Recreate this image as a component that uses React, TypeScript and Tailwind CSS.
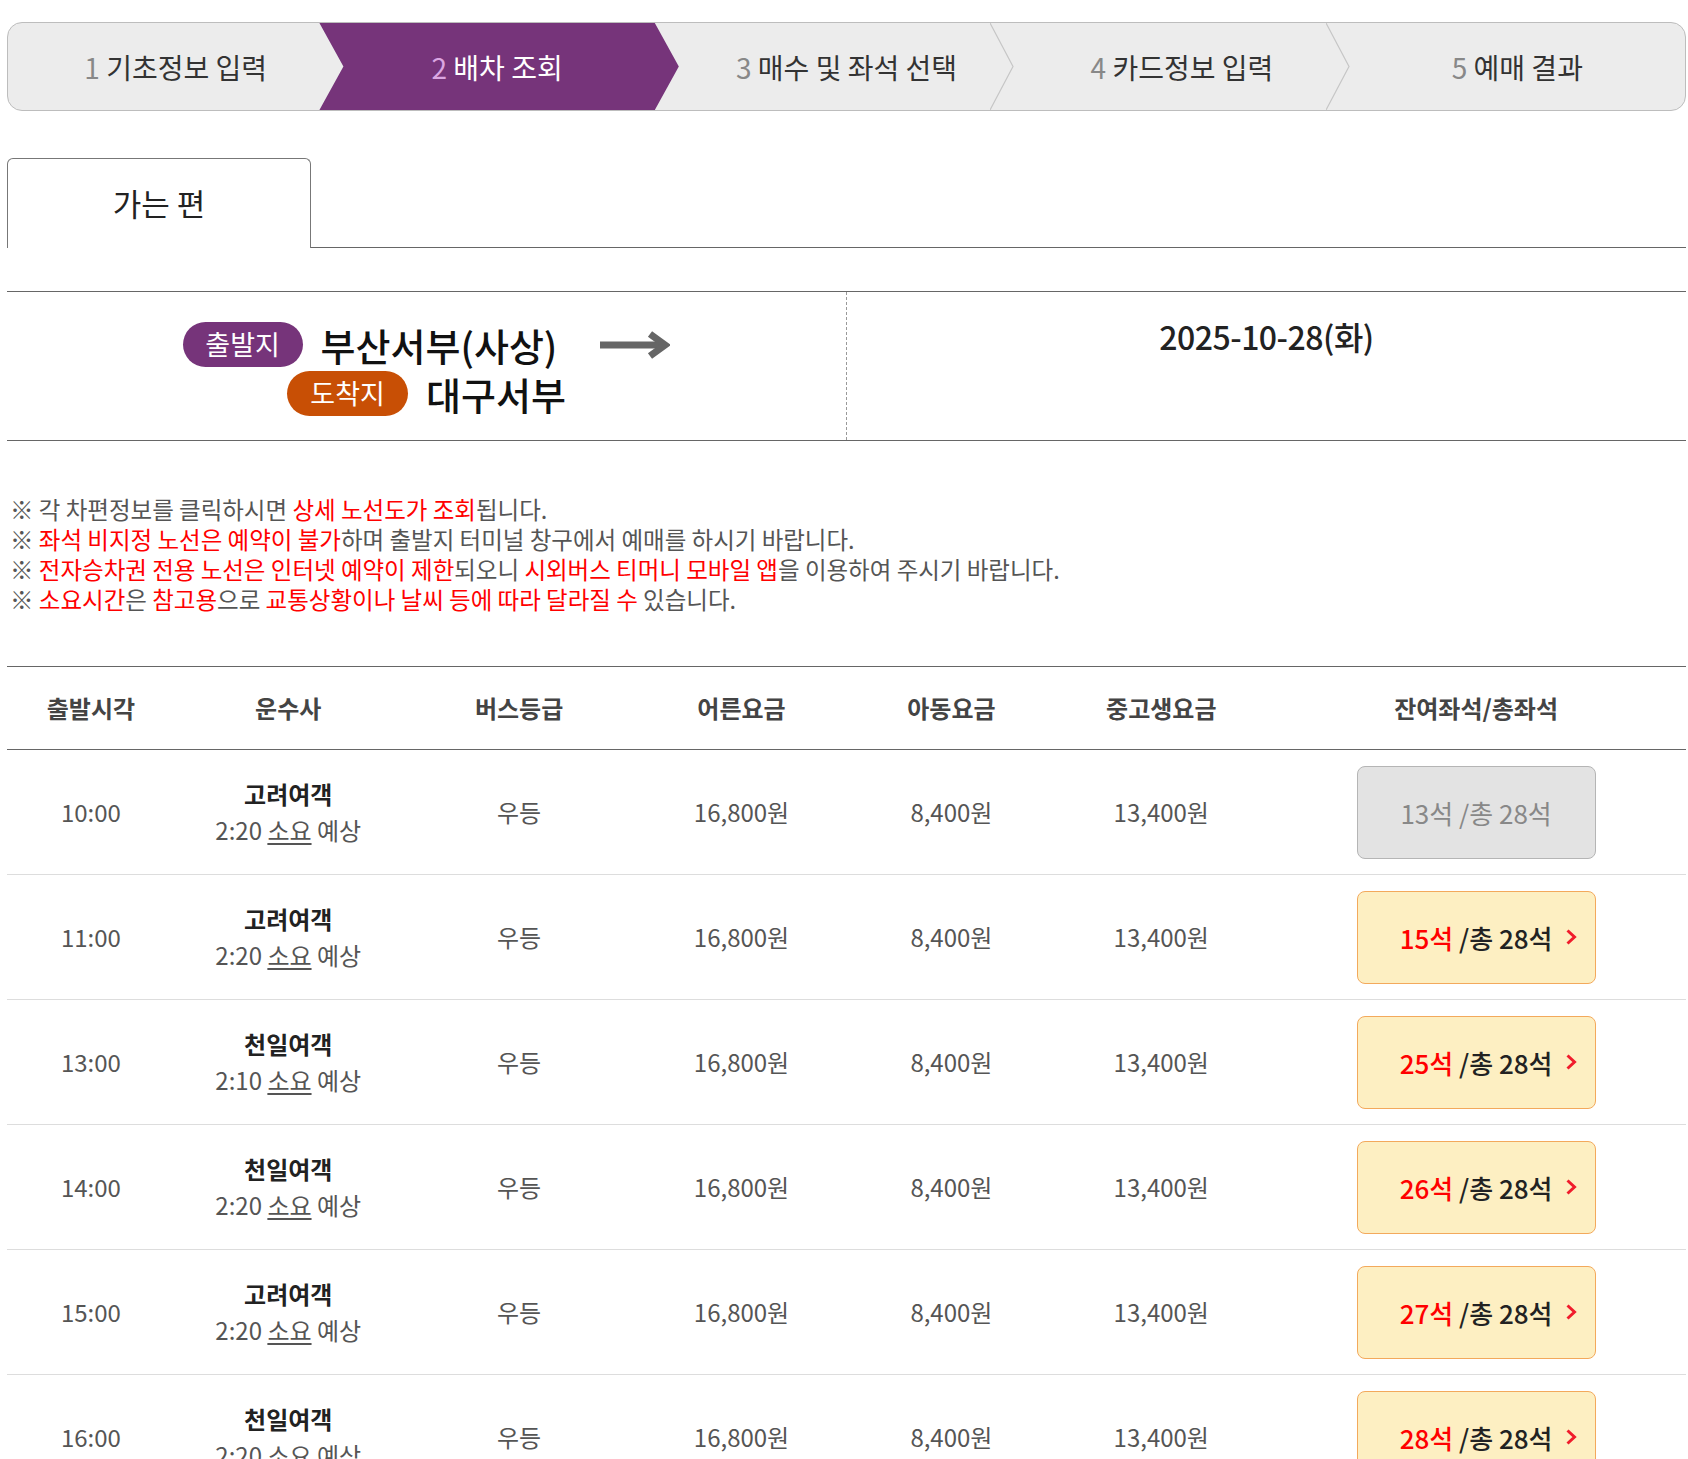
import React from "react";

const steps = ["기초정보 입력", "배차 조회", "매수 및 좌석 선택", "카드정보 입력", "예매 결과"];

type Row = { time: string; company: string; dur: string; seats: number; active: boolean };
const rows: Row[] = [
  { time: "10:00", company: "고려여객", dur: "2:20", seats: 13, active: false },
  { time: "11:00", company: "고려여객", dur: "2:20", seats: 15, active: true },
  { time: "13:00", company: "천일여객", dur: "2:10", seats: 25, active: true },
  { time: "14:00", company: "천일여객", dur: "2:20", seats: 26, active: true },
  { time: "15:00", company: "고려여객", dur: "2:20", seats: 27, active: true },
  { time: "16:00", company: "천일여객", dur: "2:20", seats: 28, active: true },
];

const gridCols = "grid grid-cols-[10%_13.5%_14%_12.5%_12.5%_12.5%_25%]";

function Red({ children }: { children: React.ReactNode }) {
  return <span className="text-[#ff0000]">{children}</span>;
}

export default function App() {
  return (
    <div className="min-h-screen bg-white pl-[7px] pr-[2px] pt-[22px] font-['Noto_Sans_CJK_KR','Noto_Sans',sans-serif] text-[#555]">
      {/* Step bar */}
      <div className="flex h-[89px] overflow-hidden rounded-[15px] border border-[#bdbdbd] bg-[#ececec]">
        {steps.map((s, i) => (
          <div key={i} className="relative flex flex-1 items-center justify-center">
            {i === 1 && (
              <div className="absolute inset-y-0 left-[-24px] right-0 bg-[#76347a] [clip-path:polygon(0_0,calc(100%_-_24px)_0,100%_50%,calc(100%_-_24px)_100%,0_100%,24px_50%)]" />
            )}
            {(i === 2 || i === 3) && (
              <svg className="absolute right-0 top-0 h-full w-[24px]" viewBox="0 0 24 88" preserveAspectRatio="none">
                <polyline points="0,0 23,44 0,88" fill="none" stroke="#c6c6c6" strokeWidth="1.2" />
              </svg>
            )}
            <span
              className={
                "relative text-[28px] " +
                (i === 1 ? "pr-[28px] text-white" : "text-[#333]")
              }
            >
              <span className={i === 1 ? "text-[#dba6e2]" : "text-[#888]"}>{i + 1}</span> {s}
            </span>
          </div>
        ))}
      </div>

      {/* Tab */}
      <div className="mt-[47px] flex h-[90px]">
        <div className="flex w-[304px] items-center justify-center rounded-t-[6px] border-x border-t border-[#777] text-[31px] text-[#222]">
          가는 편
        </div>
        <div className="flex-1 border-b border-[#666]" />
      </div>

      {/* Route */}
      <div className="mt-[43px] flex h-[150px] border-y border-[#666]">
        <div className="flex w-[840px] flex-col items-center gap-[4px] border-r border-dashed border-[#999] pt-[30px]">
          <div className="flex h-[45px] items-center">
            <span className="flex h-[45px] w-[120px] items-center justify-center rounded-full bg-[#76347a] text-[27px] text-white">
              출발지
            </span>
            <span className="ml-[18px] text-[38px] font-medium leading-none text-[#111]">부산서부(사상)</span>
            <svg className="ml-[43px]" width="70" height="28" viewBox="0 0 70 28">
              <line x1="0" y1="14" x2="62" y2="14" stroke="#666" strokeWidth="7" />
              <polyline points="50,3 65,14 50,25" fill="none" stroke="#666" strokeWidth="7" />
            </svg>
          </div>
          <div className="flex h-[45px] items-center">
            <span className="flex h-[45px] w-[121px] items-center justify-center rounded-full bg-[#c84f05] text-[27px] text-white">
              도착지
            </span>
            <span className="ml-[18px] text-[38px] font-medium leading-none text-[#111]">대구서부</span>
          </div>
        </div>
        <div className="flex flex-1 justify-center pt-[20px]">
          <span className="text-[32px] font-medium tracking-[-0.5px] text-[#222]">2025-10-28(화)</span>
        </div>
      </div>

      {/* Notices */}
      <div className="mt-[53px] pl-[3px] text-[23.5px] leading-[30px] text-[#555]">
        <p>
          ※ 각 차편정보를 클릭하시면 <Red>상세 노선도가 조회</Red>됩니다.
        </p>
        <p>
          ※ <Red>좌석 비지정 노선은 예약이 불가</Red>하며 출발지 터미널 창구에서 예매를 하시기 바랍니다.
        </p>
        <p>
          ※ <Red>전자승차권 전용 노선은 인터넷 예약이 제한</Red>되오니 <Red>시외버스 티머니 모바일 앱</Red>을 이용하여 주시기 바랍니다.
        </p>
        <p>
          ※ <Red>소요시간</Red>은 <Red>참고용</Red>으로 <Red>교통상황이나 날씨 등에 따라 달라질 수</Red> 있습니다.
        </p>
      </div>

      {/* Table */}
      <div className="mt-[52px]">
        <div className={gridCols + " h-[84px] items-center border-y border-[#666] text-center text-[24px] font-bold text-[#444]"}>
          <div>출발시각</div>
          <div>운수사</div>
          <div>버스등급</div>
          <div>어른요금</div>
          <div>아동요금</div>
          <div>중고생요금</div>
          <div>잔여좌석/총좌석</div>
        </div>
        {rows.map((r, i) => (
          <div key={i} className={gridCols + " h-[125px] items-center border-b border-[#ddd] text-center text-[24px] text-[#555]"}>
            <div>{r.time}</div>
            <div className="flex flex-col items-center leading-[36px]">
              <span className="font-bold text-[#222]">{r.company}</span>
              <span>
                {r.dur} <span className="underline underline-offset-[3px]">소요</span> 예상
              </span>
            </div>
            <div>우등</div>
            <div>16,800원</div>
            <div>8,400원</div>
            <div>13,400원</div>
            <div className="flex justify-center">
              {r.active ? (
                <div className="relative flex h-[93px] w-[239px] items-center justify-center rounded-[8px] border border-[#f3a95c] bg-[#fdefc2] text-[26px] font-medium text-[#222]">
                  <span>
                    <span className="text-[#ff0000]">{r.seats}석</span> /총 28석
                  </span>
                  <svg className="absolute right-[18px] top-1/2 -translate-y-1/2" width="12" height="18" viewBox="0 0 12 18">
                    <polyline points="2.5,2.5 9.5,9 2.5,15.5" fill="none" stroke="#f01c2c" strokeWidth="3" />
                  </svg>
                </div>
              ) : (
                <div className="flex h-[93px] w-[239px] items-center justify-center rounded-[8px] border border-[#b5b5b5] bg-[#e3e3e3] text-[26px] text-[#888]">
                  {r.seats}석 /총 28석
                </div>
              )}
            </div>
          </div>
        ))}
      </div>
    </div>
  );
}
